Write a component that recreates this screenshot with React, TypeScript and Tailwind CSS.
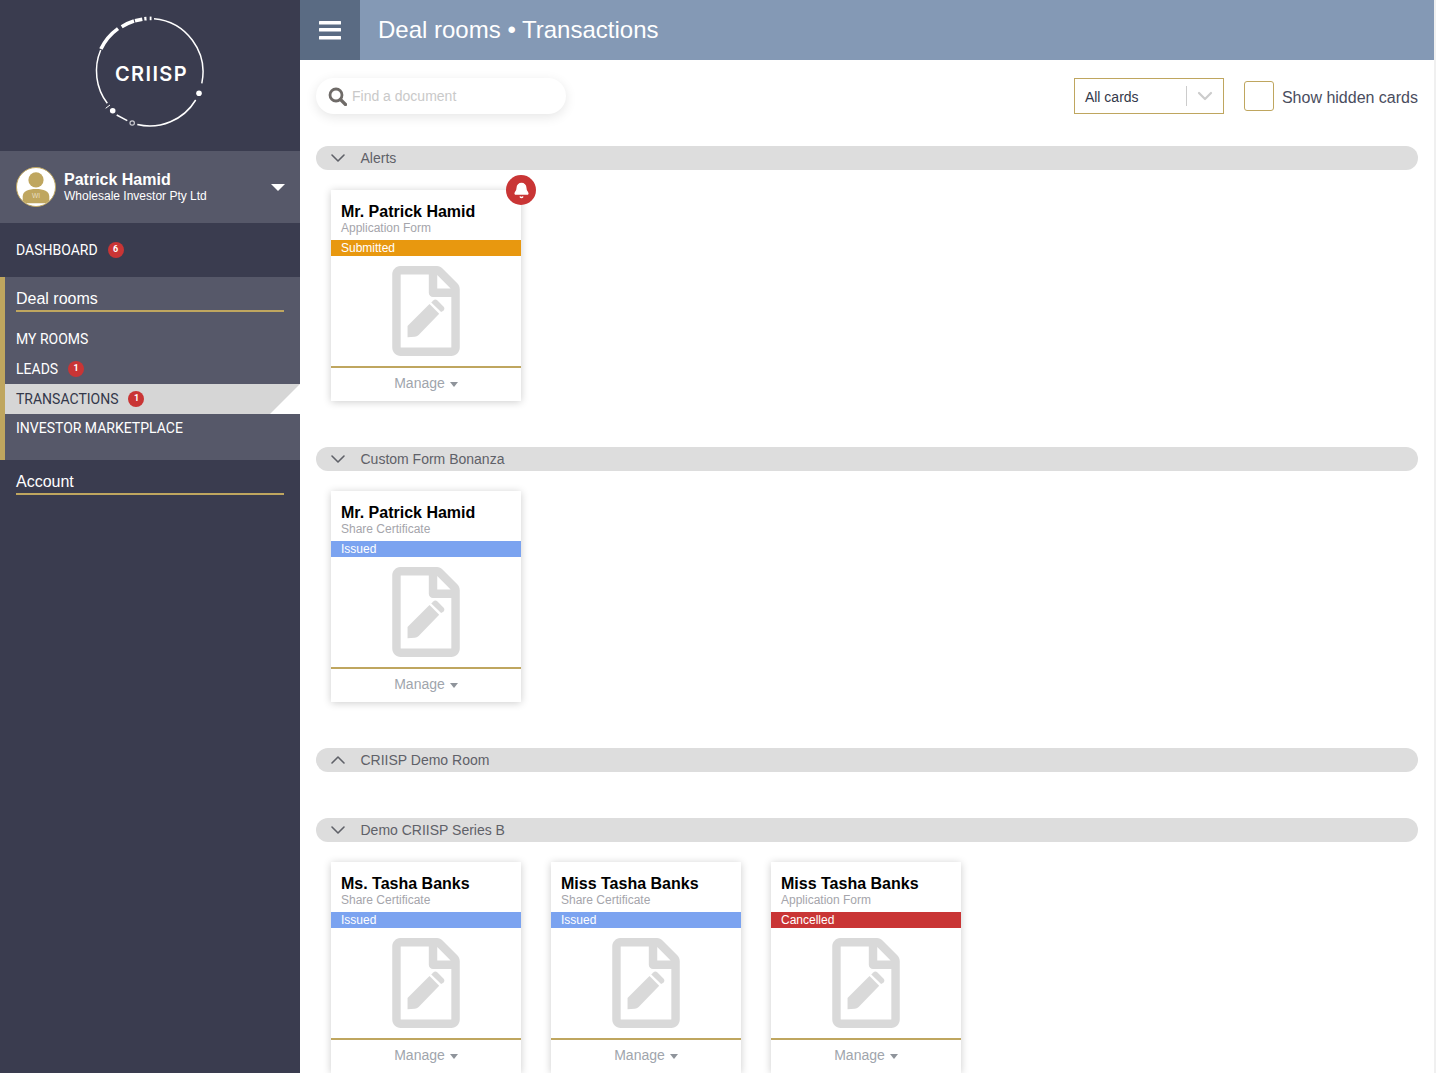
import React from 'react'
import { ChevronDown, ChevronUp, Bell } from 'lucide-react'

type Doc = {
  name: string
  form: string
  status: 'Submitted' | 'Issued' | 'Cancelled'
  alert?: boolean
}

const statusBg: Record<Doc['status'], string> = {
  Submitted: 'bg-[#e8980f]',
  Issued: 'bg-[#7ba3f0]',
  Cancelled: 'bg-[#c93535]',
}

function Logo() {
  return (
    <div className="relative h-[112px] w-[112px]">
      <svg viewBox="0 0 112 112" className="h-full w-full" fill="none" stroke="#fff" strokeWidth="1.5">
        {/* thin ring */}
        <path d="M 60 2.7 A 53.7 53.7 0 0 1 107.8 67.3" />
        <path d="M 101.7 84 A 53.7 53.7 0 0 1 43.3 108.5" />
        <path d="M 33.3 104.7 L 22.7 99" />
        <path d="M 13.3 87.3 A 53.7 53.7 0 0 1 6.7 34" />
        <path d="M 16 89 L 11.7 92.3" strokeWidth="1" />
        {/* thick dashes at the top */}
        <path d="M 6.9 33 A 53.7 53.7 0 0 1 24 12.6" strokeWidth="3.6" />
        <path d="M 27.7 10.7 A 53.7 53.7 0 0 1 40 5" strokeWidth="3.6" />
        <path d="M 41 4.7 L 48.3 3.2" strokeWidth="3.6" />
        <path d="M 50.3 2.8 L 52.5 2.6" strokeWidth="3.6" />
        <path d="M 55.7 2.4 L 57.5 2.4" strokeWidth="3.6" />
        <circle cx="105" cy="77.3" r="2.8" fill="#fff" stroke="none" />
        <circle cx="18.7" cy="94.7" r="2.8" fill="#fff" stroke="none" />
        <circle cx="38.2" cy="107" r="2.2" stroke="#c9c9cf" strokeWidth="1.2" />
      </svg>
      <span className="absolute inset-0 flex items-center justify-center pl-[4px] pt-1 font-['Inter',sans-serif] text-[20px] font-semibold tracking-[1.4px] text-white">
        CRIISP
      </span>
    </div>
  )
}

function Avatar() {
  return (
    <div className="h-10 w-10 shrink-0 overflow-hidden rounded-full border border-[#bfa65f] bg-white">
      <svg viewBox="0 0 40 40" className="h-full w-full">
        <circle cx="20" cy="12.5" r="8" fill="#bfa65f" />
        <path d="M6 37 V30 C6 24 12 22 20 22 C28 22 34 24 34 30 V37 Z" fill="#bfa65f" />
        <text x="20" y="32" textAnchor="middle" fontSize="7" fill="#e9dfc0" fontFamily="Liberation Sans">
          WI
        </text>
      </svg>
    </div>
  )
}

function Badge({ n }: { n: number }) {
  return (
    <span className="ml-[10px] flex h-4 w-4 items-center justify-center rounded-full bg-[#c93535] text-[9px] font-bold text-white">
      {n}
    </span>
  )
}

function DocIcon() {
  return (
    <svg viewBox="0 0 384 512" className="h-[90px] w-[68px]" fill="#d9d9d9">
      <path d="M369.9 97.9L286 14C277 5 264.8-.1 252.1-.1H48C21.5 0 0 21.5 0 48v416c0 26.5 21.5 48 48 48h288c26.5 0 48-21.5 48-48V131.9c0-12.7-5.1-25-14.1-34zM332.1 128H256V51.9l76.1 76.1zM48 464V48h160v104c0 13.3 10.7 24 24 24h104v288H48z" />
      <path d="M87 341 L212 216 L267 271 L150 392 Q140 402 128 402 L87 405 Z" />
      <path d="M222 207 L233 196 Q245 185 257 196 L291 231 Q302 243 291 255 L278 262 Z" />
    </svg>
  )
}

function Card({ doc }: { doc: Doc }) {
  return (
    <div className="relative w-[190px] bg-white shadow-[0_1px_8px_rgba(0,0,0,0.2)]">
      {doc.alert && (
        <div className="absolute right-[-15px] top-[-15px] flex h-[30px] w-[30px] items-center justify-center rounded-full bg-[#c93535]">
          <Bell size={17} fill="#fff" stroke="#fff" />
        </div>
      )}
      <div className="px-[10px] pt-[12px]">
        <div className="text-[16px] font-bold leading-[19px] text-black">{doc.name}</div>
        <div className="text-[12px] leading-[14px] text-[#a5a5ab]">{doc.form}</div>
      </div>
      <div className={`mt-[5px] h-4 px-[10px] text-[12px] leading-4 text-white ${statusBg[doc.status]}`}>
        {doc.status}
      </div>
      <div className="flex h-[112px] items-start justify-center border-b-2 border-[#bfa65f] pt-[10px]">
        <DocIcon />
      </div>
      <div className="flex h-[33px] items-center justify-center gap-[5px] pb-[2px] text-[14px] text-[#a0a5ac]">
        Manage
        <span className="mt-[1px] h-0 w-0 border-x-[4.5px] border-t-[5px] border-x-transparent border-t-[#8f949b]" />
      </div>
    </div>
  )
}

function Section({ title, open = true, docs = [], className = '' }: { title: string; open?: boolean; docs?: Doc[]; className?: string }) {
  return (
    <section className={className}>
      <div className="flex h-6 items-center rounded-xl bg-[#dddddd] pl-[10px] text-[14px] text-[#5f6168]">
        {open ? <ChevronDown size={24} strokeWidth={1.6} /> : <ChevronUp size={24} strokeWidth={1.6} />}
        <span className="ml-[10.5px]">{title}</span>
      </div>
      {docs.length > 0 && (
        <div className="mt-5 flex gap-[30px] pl-[15px]">
          {docs.map((d, i) => (
            <Card key={i} doc={d} />
          ))}
        </div>
      )}
    </section>
  )
}

function NavLink({ label, badge, active }: { label: string; badge?: number; active?: boolean }) {
  return (
    <div
      className={`relative flex h-[30px] items-center pl-[11px] font-['Roboto',sans-serif] text-[14px] ${active ? 'bg-[#d6d6d6] text-[#33384a]' : 'text-white'}`}
    >
      {label}
      {badge !== undefined && <Badge n={badge} />}
      {active && <span className="absolute bottom-0 right-0 h-0 w-0 border-b-[30px] border-l-[30px] border-b-white border-l-transparent" />}
    </div>
  )
}

export default function App(): React.JSX.Element {
  return (
    <div className="flex h-[1073px] overflow-hidden bg-white font-['Liberation_Sans',sans-serif]">
      <aside className="w-[300px] shrink-0 bg-[#3a3c4f]">
        <div className="flex h-[151px] items-start justify-center pr-[1px] pt-[16px]">
          <Logo />
        </div>
        <div className="flex h-[72px] items-center bg-[#565869] pl-4 pr-[15px]">
          <Avatar />
          <div className="ml-2 flex-1 text-white">
            <div className="text-[16px] font-bold leading-[18px]">Patrick Hamid</div>
            <div className="text-[12px] leading-[14px]">Wholesale Investor Pty Ltd</div>
          </div>
          <span className="h-0 w-0 border-x-[7px] border-t-[7px] border-x-transparent border-t-white" />
        </div>
        <div className="flex h-[54px] items-center pl-4 font-['Roboto',sans-serif] text-[14px] text-white">
          DASHBOARD
          <Badge n={6} />
        </div>
        <div className="h-[183px] border-l-[5px] border-[#bfa65f] bg-[#565869]">
          <div className="ml-[11px] mr-4 flex h-[35px] items-end border-b-2 border-[#bfa65f] pb-[1px] text-[16px] leading-5 text-white">
            Deal rooms
          </div>
          <div className="mt-3">
            <NavLink label="MY ROOMS" />
            <NavLink label="LEADS" badge={1} />
            <NavLink label="TRANSACTIONS" badge={1} active />
            <div className="-mt-[1px]">
              <NavLink label="INVESTOR MARKETPLACE" />
            </div>
          </div>
        </div>
        <div className="mx-4 flex h-[35px] items-end border-b-2 border-[#bfa65f] pb-[1px] text-[16px] leading-5 text-white">
          Account
        </div>
      </aside>

      <main className="min-w-0 flex-1">
        <header className="flex h-[60px] items-center bg-[#8499b5]">
          <div className="flex h-full w-[60px] items-center justify-center bg-[#5a6b83]">
            <svg width="22" height="19" viewBox="0 0 22 19" fill="#fff">
              <rect width="22" height="3.5" rx="0.5" />
              <rect y="7" width="22" height="3.5" rx="0.5" />
              <rect y="15" width="22" height="3.5" rx="0.5" />
            </svg>
          </div>
          <h1 className="ml-[18px] text-[24px] font-normal text-white">Deal rooms • Transactions</h1>
        </header>

        <div className="pl-4 pr-4">
          <div className="flex h-[86px] items-center pb-[14px]">
            <div className="flex h-9 w-[250px] items-center rounded-[18px] bg-white pl-3 text-[14px] text-[#c9c9c9] shadow-[0_3px_12px_rgba(0,0,0,0.1)]">
              <svg width="19" height="19" viewBox="0 0 19 19" fill="none" stroke="#6f6b68">
                <circle cx="8" cy="8" r="6" strokeWidth="2.8" />
                <path d="M12.5 12.5 L17.5 17.5" strokeWidth="3.2" strokeLinecap="round" />
              </svg>
              <span className="ml-[5px]">Find a document</span>
            </div>
            <div className="ml-auto flex h-9 w-[150px] items-center border border-[#bfa65f] pl-[10px] text-[14px] text-[#33384a]">
              <span className="flex-1 pt-[2px]">All cards</span>
              <span className="h-5 w-px bg-[#cccccc]" />
              <ChevronDown size={24} strokeWidth={2.2} className="ml-[6px] mr-[6px] text-[#cccccc]" />
            </div>
            <div className="ml-5 h-[30px] w-[30px] rounded-[3px] border border-[#bfa65f]" />
            <span className="ml-2 mt-1 text-[16px] text-[#4a4d5e]">Show hidden cards</span>
          </div>

          <Section title="Alerts" docs={[{ name: 'Mr. Patrick Hamid', form: 'Application Form', status: 'Submitted', alert: true }]} />
          <Section
            className="mt-[46px]"
            title="Custom Form Bonanza"
            docs={[{ name: 'Mr. Patrick Hamid', form: 'Share Certificate', status: 'Issued' }]}
          />
          <Section className="mt-[46px]" title="CRIISP Demo Room" open={false} />
          <Section
            className="mt-[46px]"
            title="Demo CRIISP Series B"
            docs={[
              { name: 'Ms. Tasha Banks', form: 'Share Certificate', status: 'Issued' },
              { name: 'Miss Tasha Banks', form: 'Share Certificate', status: 'Issued' },
              { name: 'Miss Tasha Banks', form: 'Application Form', status: 'Cancelled' },
            ]}
          />
        </div>
      </main>
      <div className="w-[2px] shrink-0 bg-[#f0f0f0]" />
    </div>
  )
}
